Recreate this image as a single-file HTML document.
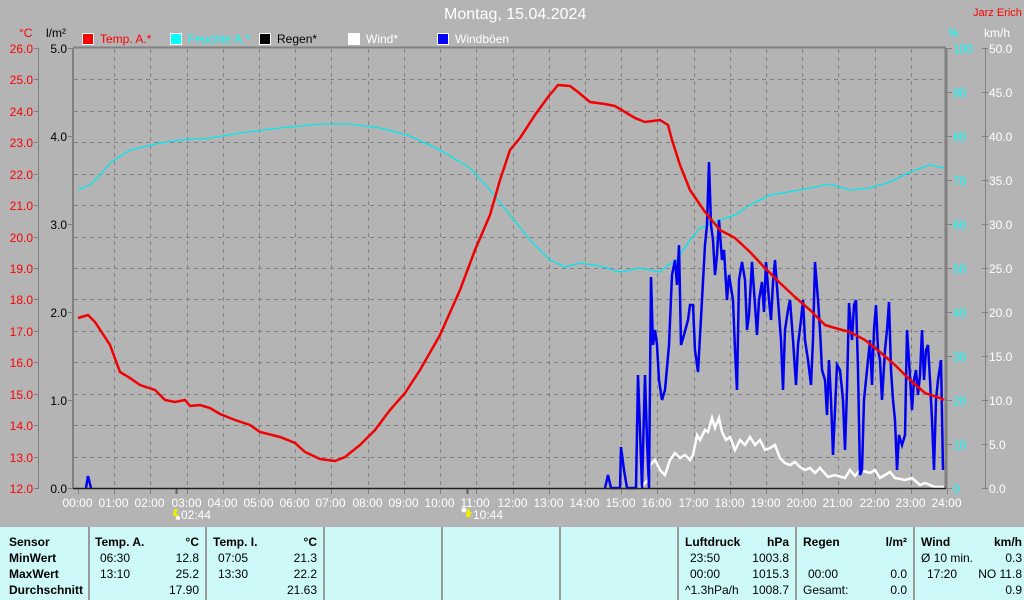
<!DOCTYPE html>
<html><head><meta charset="utf-8">
<style>
html,body{margin:0;padding:0}
body{width:1024px;height:600px;background:#b4b4b4;position:relative;overflow:hidden;font-family:"Liberation Sans",sans-serif;font-size:12px}
.t{position:absolute;white-space:nowrap;line-height:14px}
#tbl{position:absolute;left:0;top:527px;width:1024px;height:73px;background:#cdf9f8}
.c{position:absolute;top:0;height:73px;border-left:2px solid #9a9a9a}
.b{font-weight:bold}
</style></head><body>
<div class="t" style="left:444px;top:6px;font-size:16px;color:#fff;line-height:18px">Montag, 15.04.2024</div>
<div class="t" style="left:973px;top:6px;color:#f00;font-size:11px">Jarz Erich</div>
<div class="t" style="left:19px;top:26px;color:#f00">°C</div>
<div class="t" style="left:46px;top:26px;color:#000">l/m²</div>
<div class="t" style="left:948px;top:26px;color:#0ff">%</div>
<div class="t" style="left:984px;top:26px;color:#fff">km/h</div>
<div class="t" style="left:82px;top:32px;color:#f00"><span style="display:inline-block;width:10px;height:10px;background:#f00;border:1px solid #fff;vertical-align:-2px;margin-right:6px"></span>Temp. A.*</div>
<div class="t" style="left:170px;top:32px;color:#0ff"><span style="display:inline-block;width:10px;height:10px;background:#0ff;border:1px solid #fff;vertical-align:-2px;margin-right:6px"></span>Feuchte A.*</div>
<div class="t" style="left:259px;top:32px;color:#000"><span style="display:inline-block;width:10px;height:10px;background:#000;border:1px solid #fff;vertical-align:-2px;margin-right:6px"></span>Regen*</div>
<div class="t" style="left:348px;top:32px;color:#fff"><span style="display:inline-block;width:10px;height:10px;background:#fff;border:1px solid #fff;vertical-align:-2px;margin-right:6px"></span>Wind*</div>
<div class="t" style="left:437px;top:32px;color:#fff"><span style="display:inline-block;width:10px;height:10px;background:#00f;border:1px solid #fff;vertical-align:-2px;margin-right:6px"></span>Windböen</div>
<div id="labels"></div>
<svg id="sv" width="1024" height="527" style="position:absolute;left:0;top:0">
<g id="grid"></g>
<polyline fill="none" stroke="#00e8f0" stroke-width="1.3" points="78,190 90,185 100,175 110,163 130,150 160,143 180,140 210,138 240,133 280,128 320,124 350,124 380,128 410,136 440,150 470,168 490,190 510,215 530,240 550,260 565,267 580,263 600,266 620,272 640,268 660,272 668,265 675,262 690,240 700,228 720,220 735,215 750,205 770,195 800,190 830,184 850,190 870,188 890,182 910,172 930,165 944,168"/>
<polyline fill="none" stroke="#fff" stroke-width="2.5" points="640,488 648,480 650,465 655,460 660,470 665,475 670,460 675,453 680,458 685,455 690,460 693,455 697,435 700,440 705,430 708,432 712,418 715,428 719,418 722,432 726,440 730,437 735,450 740,440 745,445 750,437 755,445 760,440 765,450 770,448 775,445 780,458 785,463 790,465 795,462 800,467 805,470 810,468 815,473 820,468 828,477 835,475 845,478 850,470 855,476 860,470 870,473 875,470 880,478 885,475 890,472 895,478 905,480 912,478 920,485 925,483 935,487 944,487"/>
<polyline fill="none" stroke="#0000f0" stroke-width="2.5" points="86,488 88,476 91,488"/>
<polyline fill="none" stroke="#0000f0" stroke-width="2.5" points="605,488 608,475 611,488 620,488 621,447 624,470 627,488 636,488 638,375 640,430 642,488 645,375 647,440 649,488 651,277 653,345 655,330 657,345 659,380 662,400 665,390 669,345 672,275 675,260 677,285 679,245 681,345 684,335 688,320 690,305 693,305 695,350 698,372 702,300 705,245 707,225 709,162 711,225 713,240 715,275 717,255 719,220 722,260 724,250 727,300 729,275 733,300 735,350 737,390 739,280 742,262 745,280 747,330 749,315 752,262 755,305 757,335 759,300 762,282 764,312 766,262 769,300 771,320 773,283 775,260 778,300 781,340 783,390 785,330 788,310 790,300 793,340 796,385 798,345 801,320 803,300 805,340 808,360 811,385 813,340 815,262 818,300 820,330 822,370 825,380 827,415 829,360 831,400 833,455 835,410 837,365 840,370 843,400 845,450 847,390 849,303 852,340 854,305 856,300 858,370 860,475 862,470 864,400 867,370 870,340 872,385 874,330 876,305 878,350 880,360 882,400 885,350 887,330 889,302 891,370 893,400 895,420 897,470 899,435 902,445 905,435 907,330 909,360 912,410 914,380 916,370 918,395 920,375 922,330 924,380 926,350 928,345 930,380 932,420 934,470 936,400 938,380 941,360 943,470"/>
<polyline fill="none" stroke="#f00000" stroke-width="2.5" points="78,318 88,315 95,322 110,345 120,372 130,378 140,385 155,390 165,400 175,402 185,400 190,406 200,405 210,408 220,414 235,420 250,425 260,432 280,437 295,443 305,452 320,459 335,461 345,457 360,445 375,430 390,410 405,393 420,370 440,335 460,290 475,250 490,215 500,180 510,150 520,138 535,115 548,97 558,85 570,86 578,92 590,102 605,104 615,106 625,112 635,118 645,122 660,120 668,125 672,140 680,165 690,190 705,212 720,230 735,238 750,252 765,268 780,283 795,297 810,310 825,325 835,328 850,332 865,340 880,352 895,365 910,380 925,393 940,398 944,400"/>
<line x1="73" y1="488.5" x2="946" y2="488.5" stroke="#202020" stroke-width="1.5"/>
<g fill="#ee0">
<path d="M174,509 l4,0 l-2,5 l3,0 l-4,6 l1,-4 l-3,0z"/>
<path d="M466,512 l3,-4 l1,4 l2,0 l-2,5 l-4,0z"/>
</g>
<circle cx="178" cy="518" r="2" fill="#fff"/>
<circle cx="464" cy="510" r="2.5" fill="#fff"/>
</svg>
<div id="tbl">
<div class="c" style="left:88px"></div><div class="c" style="left:205px"></div><div class="c" style="left:323px"></div><div class="c" style="left:441px"></div><div class="c" style="left:559px"></div><div class="c" style="left:677px"></div><div class="c" style="left:795px"></div><div class="c" style="left:913px"></div>
<div class="t b" style="left:9px;top:8px">Sensor</div>
<div class="t b" style="left:9px;top:24px">MinWert</div>
<div class="t b" style="left:9px;top:40px">MaxWert</div>
<div class="t b" style="left:9px;top:56px">Durchschnitt</div>
<div class="t b" style="left:95px;top:8px">Temp. A.</div><div class="t b" style="right:825px;top:8px">°C</div>
<div class="t" style="left:100px;top:24px">06:30</div><div class="t" style="right:825px;top:24px">12.8</div>
<div class="t" style="left:100px;top:40px">13:10</div><div class="t" style="right:825px;top:40px">25.2</div>
<div class="t" style="right:825px;top:56px">17.90</div>
<div class="t b" style="left:213px;top:8px">Temp. I.</div><div class="t b" style="right:707px;top:8px">°C</div>
<div class="t" style="left:218px;top:24px">07:05</div><div class="t" style="right:707px;top:24px">21.3</div>
<div class="t" style="left:218px;top:40px">13:30</div><div class="t" style="right:707px;top:40px">22.2</div>
<div class="t" style="right:707px;top:56px">21.63</div>
<div class="t b" style="left:685px;top:8px">Luftdruck</div><div class="t b" style="right:235px;top:8px">hPa</div>
<div class="t" style="left:690px;top:24px">23:50</div><div class="t" style="right:235px;top:24px">1003.8</div>
<div class="t" style="left:690px;top:40px">00:00</div><div class="t" style="right:235px;top:40px">1015.3</div>
<div class="t" style="left:685px;top:56px">^1.3hPa/h</div><div class="t" style="right:235px;top:56px">1008.7</div>
<div class="t b" style="left:803px;top:8px">Regen</div><div class="t b" style="right:117px;top:8px">l/m²</div>
<div class="t" style="left:808px;top:40px">00:00</div><div class="t" style="right:117px;top:40px">0.0</div>
<div class="t" style="left:803px;top:56px">Gesamt:</div><div class="t" style="right:117px;top:56px">0.0</div>
<div class="t b" style="left:921px;top:8px">Wind</div><div class="t b" style="right:2px;top:8px">km/h</div>
<div class="t" style="left:921px;top:24px">Ø 10 min.</div><div class="t" style="right:2px;top:24px">0.3</div>
<div class="t" style="left:927px;top:40px">17:20</div><div class="t" style="right:2px;top:40px">NO 11.8</div>
<div class="t" style="right:2px;top:56px">0.9</div>
</div>
<script>
var g=document.getElementById('grid'),L=document.getElementById('labels'),s='',h='';
var X0=78,DX=(947-78)/24;
function ln(x1,y1,x2,y2,c,w,d){s+='<line x1="'+x1+'" y1="'+y1+'" x2="'+x2+'" y2="'+y2+'" stroke="'+c+'" stroke-width="'+(w||1)+'"'+(d?' stroke-dasharray="4,4"':'')+'/>';}
for(var k=0;k<=14;k++){var y=Math.round(48+k*440/14)+.5;
 if(k>0&&k<14)ln(74,y,944,y,'#808080',1,1);
 ln(34,y,39,y,'#808080');
 h+='<div class="t" style="right:'+(1024-33)+'px;top:'+(y-7)+'px;color:#f00">'+(26-k).toFixed(1)+'</div>';}
for(var k=0;k<=5;k++){var y=Math.round(48+k*88)+.5;ln(68,y,73,y,'#808080');
 h+='<div class="t" style="right:'+(1024-67)+'px;top:'+(y-7)+'px;color:#000">'+(5-k).toFixed(1)+'</div>';}
for(var k=0;k<=10;k++){var y=Math.round(48+k*44)+.5;ln(946,y,952,y,'#808080');ln(982,y,988,y,'#808080');
 h+='<div class="t" style="left:953px;top:'+(y-7)+'px;color:#0ff">'+(100-k*10)+'</div>';
 h+='<div class="t" style="left:989px;top:'+(y-7)+'px;color:#fff">'+(50-k*5).toFixed(1)+'</div>';}
for(var i=0;i<=24;i++){var x=Math.round(X0+i*DX)+.5;
 if(i>0&&i<24)ln(x,49,x,487,'#808080',1,1);
 ln(x,488,x,494,'#808080');
 h+='<div class="t" style="left:'+(x-16)+'px;top:496px;color:#fff">'+(i<10?'0':'')+i+':00</div>';}
ln(38.5,48,38.5,488,'#808080');ln(985.5,48,985.5,488,'#808080');
ln(73,47.5,946,47.5,'#808080',2);ln(73,48,73,489,'#808080',2);ln(946,48,946,489,'#808080',3);
ln(176.5,488,176.5,494,'#606060',2);ln(467.5,488,467.5,494,'#606060',2);
h+='<div class="t" style="left:181px;top:508px;color:#fff">02:44</div><div class="t" style="left:473px;top:508px;color:#fff">10:44</div>';
g.innerHTML=s;L.innerHTML=h;
</script>
</body></html>
